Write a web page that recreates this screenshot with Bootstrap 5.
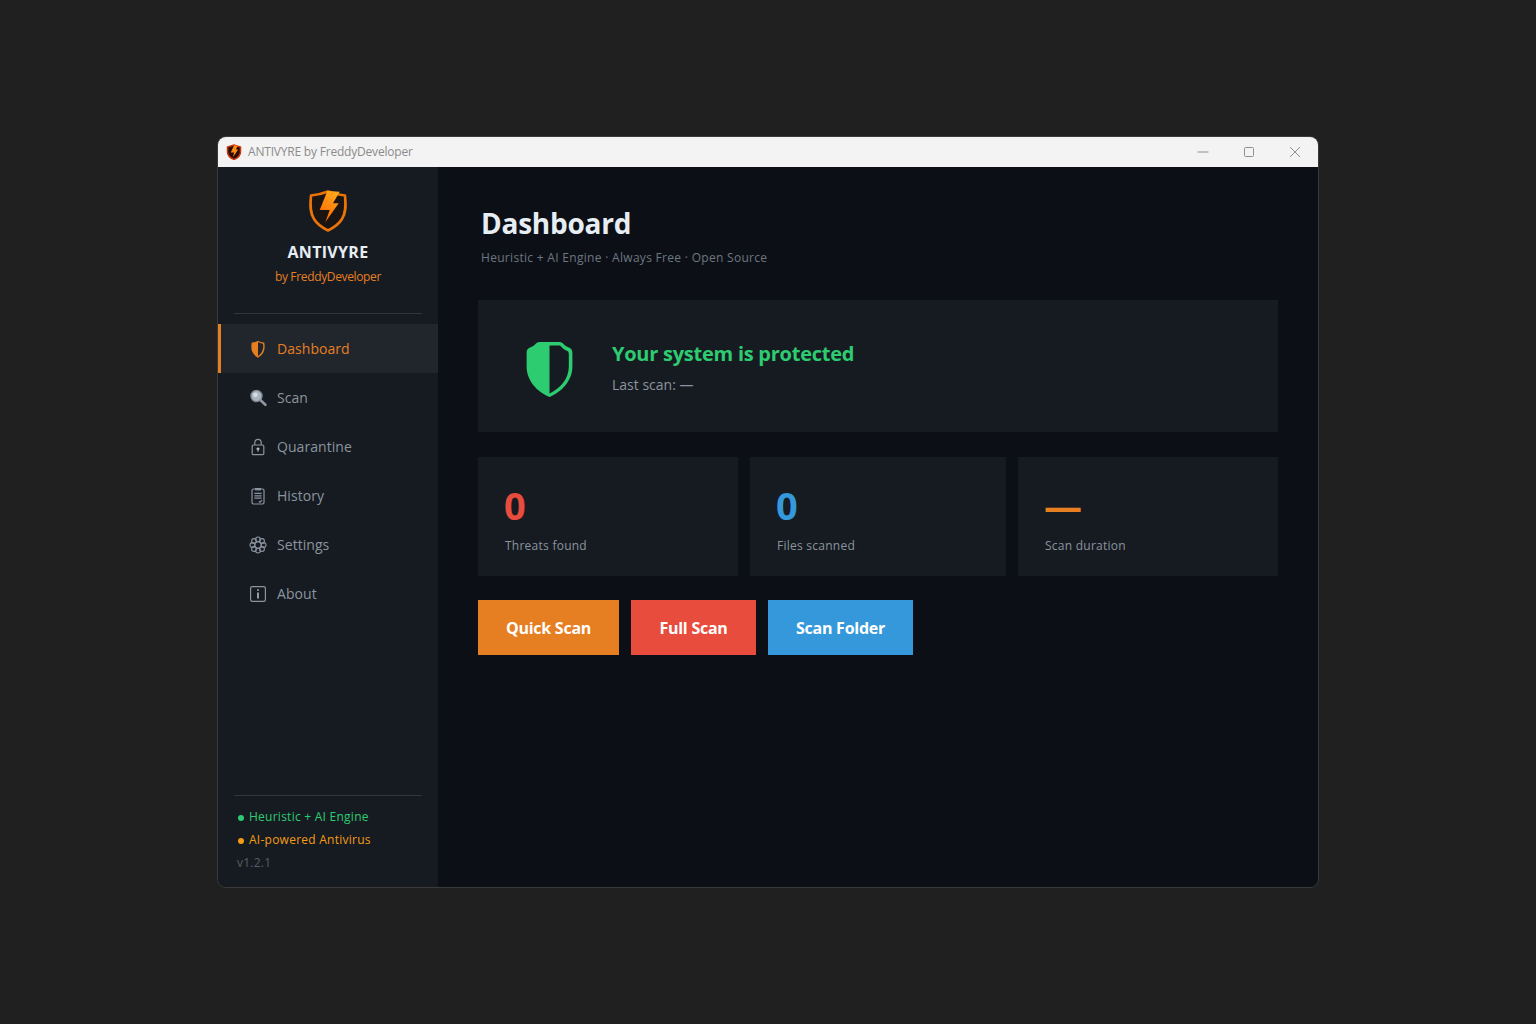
<!DOCTYPE html>
<html lang="en">
<head>
  <meta charset="UTF-8" />
  <meta name="viewport" content="width=device-width, initial-scale=1.0"/>
  <title>ANTIVYRE by FreddyDeveloper</title>
  <link href="https://cdn.jsdelivr.net/npm/bootstrap@5.3.0/dist/css/bootstrap.min.css" rel="stylesheet"/>
  <style>
    html, body { height: 100%; }
    body {
      background: #202020;
      font-family: "Open Sans", "Noto Sans", sans-serif;
    }

    /* window frame */
    .app-window {
      width: 1100px;
      height: 750px;
      border-radius: 8px;
      overflow: hidden;
      box-shadow: 0 0 0 1px #3a3a3a;
    }
    .title-bar {
      height: 30px;
      background: #f3f3f3;
      color: #8b8b8b;
      font-size: 12px;
      padding-left: 8px;
      letter-spacing: -0.2px;
    }
    .title-icon { margin-right: 6px; }
    .win-btn { width: 46px; }

    /* sidebar */
    .side-panel { width: 220px; background: #161b22; }
    .brand-box { height: 146px; padding-top: 22px; }
    .brand-name { font-size: 16px; font-weight: 700; color: #e6edf3; line-height: 22px; margin-top: 8px; letter-spacing: 0.3px; }
    .brand-by { font-size: 12px; color: #e67e22; line-height: 16px; margin-top: 6px; letter-spacing: -0.35px; }
    .side-rule { height: 1px; background: #30363d; margin: 0 16px; }
    .side-nav { margin-top: 10px; }
    .side-link {
      height: 49px;
      padding-left: 30px;
      gap: 9px;
      color: #8b949e;
      font-size: 14px;
      text-decoration: none;
      letter-spacing: 0.05px;
    }
    .side-link svg { width: 20px; height: 20px; flex: none; }
    .side-link.on {
      background: #21262d;
      color: #e67e22;
      border-left: 3px solid #e67e22;
      padding-left: 27px;
    }
    .side-foot { padding: 0 0 13px; }
    .foot-lines { padding: 9px 19px 0; font-size: 12px; letter-spacing: 0.25px; }
    .foot-lines div { line-height: 23px; }
    .foot-green { color: #2ecc71; }
    .foot-orange { color: #f39c12; }
    .foot-ver { color: #565d66; }
    .dot-mark { display: inline-block; width: 6px; height: 6px; border-radius: 50%; background: currentColor; margin: 0 5px 0 1px; }

    /* main */
    .main-pane { background: #0c1016; padding: 37px 40px 0; }
    .page-title { font-size: 28px; font-weight: 700; color: #e6edf3; line-height: 38px; margin: 0 0 0 3px; letter-spacing: -0.25px; }
    .page-sub { font-size: 12px; color: #6e7681; line-height: 16px; margin: 8px 0 0 3px; letter-spacing: 0.3px; }
    .status-panel { height: 132px; margin-top: 34px; background: #161b22; padding-left: 46px; gap: 37px; }
    .status-shield { margin-top: 6px; }
    .status-text { margin-top: 2px; }
    .status-title { font-size: 20px; font-weight: 700; color: #2ecc71; line-height: 27px; letter-spacing: -0.25px; }
    .status-last { font-size: 14px; color: #8b949e; line-height: 19px; margin-top: 8px; }
    .stat-row { display: grid; grid-template-columns: 260px 256px 260px; gap: 12px; margin-top: 25px; }
    .stat-tile { height: 119px; background: #161b22; padding: 26px 27px 0; }
    .stat-num { font-size: 38px; font-weight: 700; line-height: 44px; height: 44px; margin-left: -1px; }
    .stat-lbl { font-size: 12px; color: #8b949e; line-height: 16px; margin-top: 11px; letter-spacing: 0.25px; }
    .num-red { color: #e74c3c; }
    .num-blue { color: #3498db; }
    .num-orange { color: #e67e22; }
    .action-row { gap: 12px; margin-top: 24px; }
    .action-btn {
      height: 55px;
      border-radius: 0;
      border: 0;
      color: #fff;
      font-size: 16px;
      font-weight: 700;
      padding: 0;
      letter-spacing: -0.25px;
    }
    .action-btn:hover { color: #fff; }
    .btn-quick { width: 141px; background: #e67e22; }
    .btn-full { width: 125px; background: #e74c3c; }
    .btn-folder { width: 145px; background: #3498db; }
    .btn-quick:hover { background: #e67e22; }
    .btn-full:hover { background: #e74c3c; }
    .btn-folder:hover { background: #3498db; }
    .svg-defs { position: absolute; width: 0; height: 0; }
  </style>
</head>
<body class="d-flex align-items-center justify-content-center">
  <svg class="svg-defs">
    <defs>
      <linearGradient id="boltFill" x1="0.7" y1="0" x2="0.3" y2="1">
        <stop offset="0" stop-color="#ffa81c"/>
        <stop offset="1" stop-color="#ff6400"/>
      </linearGradient>
    </defs>
  </svg>

  <div class="app-window d-flex flex-column">
    <!-- title bar -->
    <div class="title-bar d-flex align-items-center flex-shrink-0">
      <svg width="16" height="16" viewBox="0 0 16 16" class="title-icon flex-shrink-0">
        <path d="M8 1 L14.5 3 V8 C14.5 11.5 11.5 14 8 15.5 C4.5 14 1.5 11.5 1.5 8 V3 Z" fill="#2e0a06"/>
        <path d="M8 1 L14.5 3 V8 C14.5 11.5 11.5 14 8 15.5 C4.5 14 1.5 11.5 1.5 8 V3 Z" fill="none" stroke="#c9380c" stroke-width="1.5"/>
        <path d="M8 1.5 H12 L9.8 5.6 H12.2 L6.8 13.4 L8.2 8.4 H4.8 Z" fill="#ff8e10"/>
      </svg>
      <span>ANTIVYRE by FreddyDeveloper</span>
      <div class="ms-auto d-flex align-items-center">
        <div class="win-btn d-flex justify-content-center">
          <svg width="12" height="12" viewBox="0 0 12 12"><path d="M0.5 6 H11.5" stroke="#8f8f8f" fill="none"/></svg>
        </div>
        <div class="win-btn d-flex justify-content-center">
          <svg width="12" height="12" viewBox="0 0 12 12"><rect x="1.5" y="1.5" width="9" height="9" rx="1" stroke="#8f8f8f" fill="none"/></svg>
        </div>
        <div class="win-btn d-flex justify-content-center">
          <svg width="12" height="12" viewBox="0 0 12 12"><path d="M1 1 L11 11 M11 1 L1 11" stroke="#8f8f8f" fill="none"/></svg>
        </div>
      </div>
    </div>

    <div class="d-flex flex-grow-1 overflow-hidden">
      <!-- sidebar -->
      <aside class="side-panel d-flex flex-column flex-shrink-0">
        <div class="brand-box text-center">
          <svg width="40" height="44" viewBox="0 0 40 44" class="d-block mx-auto">
            <path d="M20 2.5 C25 4.5 31 6 37 6.5 C38 17 38 24 34 30 C31 35 25 39 20 41.5 C15 39 9 35 6 30 C2 24 2 17 3 6.5 C9 6 15 4.5 20 2.5 Z" fill="#1a1512" stroke="#ea7408" stroke-width="2.6" stroke-linejoin="round"/>
            <path d="M19.3 2 L31.7 2.7 L25 14.3 H30.7 L17.3 33.3 L21.7 21 H11.7 Z" fill="url(#boltFill)"/>
          </svg>
          <div class="brand-name">ANTIVYRE</div>
          <div class="brand-by">by FreddyDeveloper</div>
        </div>
        <div class="side-rule"></div>

        <nav class="side-nav d-flex flex-column">
          <a href="#" class="side-link on d-flex align-items-center">
            <svg viewBox="0 0 20 20">
              <path d="M10 2.5 C12 3.6 14 4 15.6 4.2 C16.4 8 16.2 14 10 18 C3.8 14 3.6 8 4.4 4.2 C6 4 8 3.6 10 2.5 Z" fill="none" stroke="#e67e22" stroke-width="1.4"/>
              <path d="M10 2.5 C8 3.6 6 4 4.4 4.2 C3.6 8 3.8 14 10 18 Z" fill="#e67e22"/>
            </svg>
            <span>Dashboard</span>
          </a>
          <a href="#" class="side-link d-flex align-items-center">
            <svg viewBox="0 0 20 20">
              <circle cx="8.5" cy="8" r="5.6" fill="#aab4bf" stroke="#7d8792" stroke-width="1.2"/>
              <circle cx="7.4" cy="6.8" r="2.4" fill="#d5dbe1"/>
              <path d="M12.6 12.2 L17.4 16.8" stroke="#8d97a2" stroke-width="2.6" stroke-linecap="round"/>
            </svg>
            <span>Scan</span>
          </a>
          <a href="#" class="side-link d-flex align-items-center">
            <svg viewBox="0 0 20 20" fill="none" stroke="#8b949e" stroke-width="1.2">
              <rect x="4.2" y="8" width="11.6" height="9.6" rx="1.2"/>
              <path d="M6.8 8 V5.6 C6.8 3.6 8.2 2.4 10 2.4 C11.8 2.4 13.2 3.6 13.2 5.6 V8"/>
              <path d="M10 11 V14.6 M8.6 12.2 L10 11 L11.4 12.2" stroke="#b6bec6"/>
            </svg>
            <span>Quarantine</span>
          </a>
          <a href="#" class="side-link d-flex align-items-center">
            <svg viewBox="0 0 20 20" fill="none" stroke="#8b949e" stroke-width="1.2">
              <rect x="4" y="3" width="12" height="15" rx="1.4"/>
              <rect x="7" y="2" width="6" height="2.4" fill="#8b949e" stroke="none"/>
              <path d="M6.4 7.4 H13.6 M6.4 9.8 H13.6 M6.4 12.2 H13.6 M10.8 15.4 L12 16.2 L14 14.2"/>
            </svg>
            <span>History</span>
          </a>
          <a href="#" class="side-link d-flex align-items-center">
            <svg viewBox="0 0 20 20" fill="none" stroke="#8b949e" stroke-width="1.1">
              <circle cx="10" cy="10" r="3.2"/>
              <circle cx="10" cy="4.4" r="2.4"/>
              <circle cx="10" cy="15.6" r="2.4"/>
              <circle cx="4.4" cy="10" r="2.4"/>
              <circle cx="15.6" cy="10" r="2.4"/>
              <circle cx="6" cy="6" r="2.4"/>
              <circle cx="14" cy="6" r="2.4"/>
              <circle cx="6" cy="14" r="2.4"/>
              <circle cx="14" cy="14" r="2.4"/>
            </svg>
            <span>Settings</span>
          </a>
          <a href="#" class="side-link d-flex align-items-center">
            <svg viewBox="0 0 20 20" fill="none" stroke="#8b949e" stroke-width="1.2">
              <rect x="2.6" y="2.6" width="14.8" height="14.8" rx="1.6"/>
              <path d="M10 8.6 V14.4" stroke-width="1.6" stroke="#b6bec6"/>
              <path d="M10 5.2 V6.8" stroke-width="1.6" stroke="#b6bec6"/>
            </svg>
            <span>About</span>
          </a>
        </nav>

        <div class="side-foot mt-auto">
          <div class="side-rule"></div>
          <div class="foot-lines">
            <div class="foot-green"><span class="dot-mark"></span>Heuristic + AI Engine</div>
            <div class="foot-orange"><span class="dot-mark"></span>AI-powered Antivirus</div>
            <div class="foot-ver">v1.2.1</div>
          </div>
        </div>
      </aside>

      <!-- main content -->
      <main class="main-pane flex-grow-1">
        <h1 class="page-title">Dashboard</h1>
        <p class="page-sub">Heuristic + AI Engine · Always Free · Open Source</p>

        <section class="status-panel d-flex align-items-center">
          <svg width="51" height="59" viewBox="0 0 50 58" class="status-shield flex-shrink-0">
            <path d="M25 2 H15 C12 2 11 5 8 6.5 C5.5 7.8 2.5 8 2.5 13 V26 C2.5 40 13 51 25 56 C37 51 47.5 40 47.5 26 V13 C47.5 8 44.5 7.8 42 6.5 C39 5 38 2 35 2 Z" fill="#2ecc71"/>
            <path d="M25 5.5 H34.5 C36.5 5.5 37 8 40.5 9.8 C43 11 44 11 44 14 V26 C44 38.5 35 48 25 52.5 Z" fill="#161b22"/>
          </svg>
          <div class="status-text">
            <div class="status-title">Your system is protected</div>
            <div class="status-last">Last scan: —</div>
          </div>
        </section>

        <section class="stat-row">
          <div class="stat-tile">
            <div class="stat-num num-red">0</div>
            <div class="stat-lbl">Threats found</div>
          </div>
          <div class="stat-tile">
            <div class="stat-num num-blue">0</div>
            <div class="stat-lbl">Files scanned</div>
          </div>
          <div class="stat-tile">
            <div class="stat-num num-orange">—</div>
            <div class="stat-lbl">Scan duration</div>
          </div>
        </section>

        <div class="action-row d-flex">
          <button type="button" class="btn action-btn btn-quick">Quick Scan</button>
          <button type="button" class="btn action-btn btn-full">Full Scan</button>
          <button type="button" class="btn action-btn btn-folder">Scan Folder</button>
        </div>
      </main>
    </div>
  </div>

  <script src="https://cdn.jsdelivr.net/npm/bootstrap@5.3.0/dist/js/bootstrap.bundle.min.js"></script>
</body>
</html>
